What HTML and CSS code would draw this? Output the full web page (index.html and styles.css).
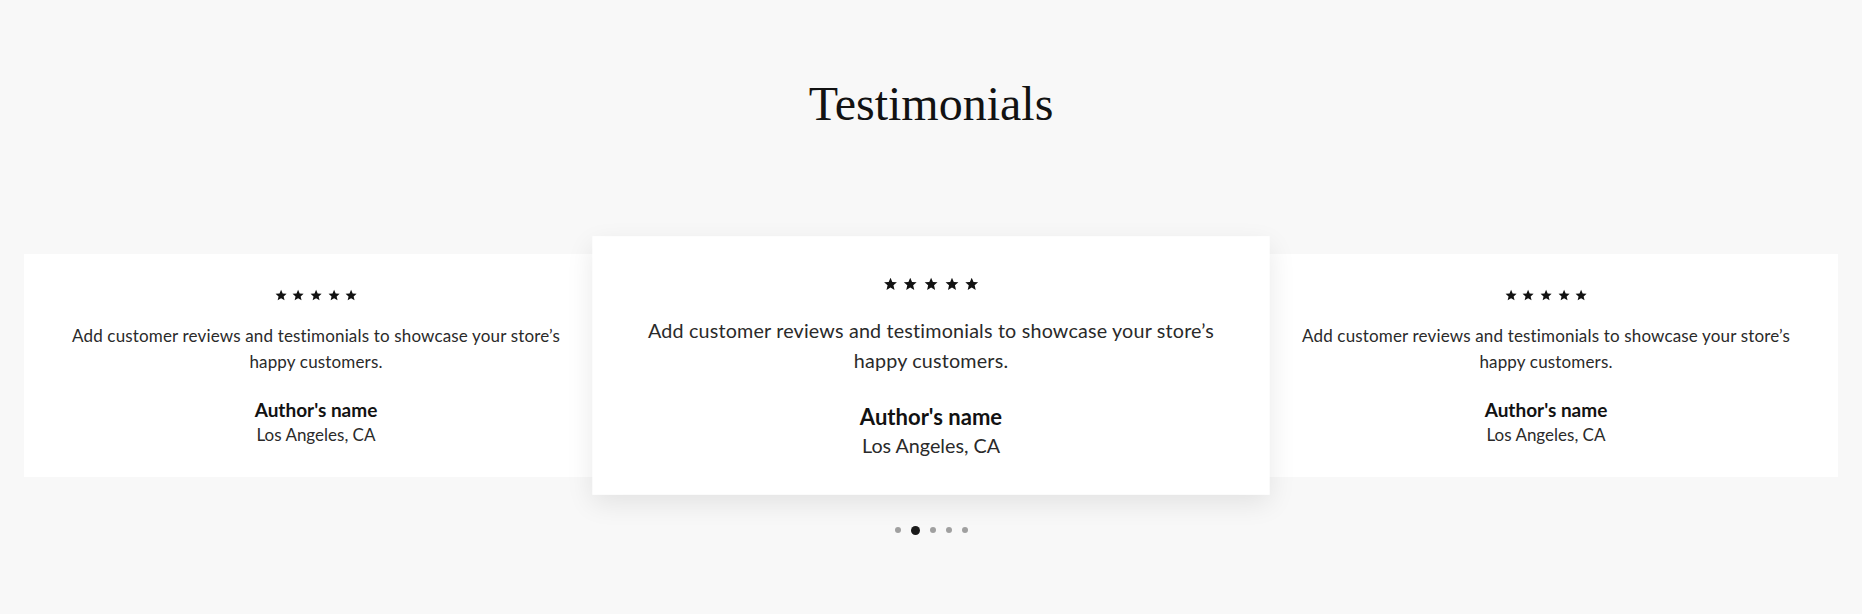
FILE: index.html
```html
<!DOCTYPE html>
<html lang="en">
<head>
<meta charset="utf-8">
<title>Testimonials</title>
<link rel="stylesheet" href="styles.css">
</head>
<body>
<section class="testimonials">
  <h2 class="title">Testimonials</h2>
  <div class="slider">
    <div class="card">
      <div class="stars">
        <svg viewBox="0 0 24 24"><path d="M12 1.5l3.1 7.2 7.8.7-5.9 5.2 1.8 7.7L12 18.3l-6.8 4 1.8-7.7-5.9-5.2 7.8-.7z"/></svg>
        <svg viewBox="0 0 24 24"><path d="M12 1.5l3.1 7.2 7.8.7-5.9 5.2 1.8 7.7L12 18.3l-6.8 4 1.8-7.7-5.9-5.2 7.8-.7z"/></svg>
        <svg viewBox="0 0 24 24"><path d="M12 1.5l3.1 7.2 7.8.7-5.9 5.2 1.8 7.7L12 18.3l-6.8 4 1.8-7.7-5.9-5.2 7.8-.7z"/></svg>
        <svg viewBox="0 0 24 24"><path d="M12 1.5l3.1 7.2 7.8.7-5.9 5.2 1.8 7.7L12 18.3l-6.8 4 1.8-7.7-5.9-5.2 7.8-.7z"/></svg>
        <svg viewBox="0 0 24 24"><path d="M12 1.5l3.1 7.2 7.8.7-5.9 5.2 1.8 7.7L12 18.3l-6.8 4 1.8-7.7-5.9-5.2 7.8-.7z"/></svg>
      </div>
      <p class="quote">Add customer reviews and testimonials to showcase your store’s happy customers.</p>
      <p class="name">Author's name</p>
      <p class="place">Los Angeles, CA</p>
    </div>
    <div class="card card--active">
      <div class="stars">
        <svg viewBox="0 0 24 24"><path d="M12 1.5l3.1 7.2 7.8.7-5.9 5.2 1.8 7.7L12 18.3l-6.8 4 1.8-7.7-5.9-5.2 7.8-.7z"/></svg>
        <svg viewBox="0 0 24 24"><path d="M12 1.5l3.1 7.2 7.8.7-5.9 5.2 1.8 7.7L12 18.3l-6.8 4 1.8-7.7-5.9-5.2 7.8-.7z"/></svg>
        <svg viewBox="0 0 24 24"><path d="M12 1.5l3.1 7.2 7.8.7-5.9 5.2 1.8 7.7L12 18.3l-6.8 4 1.8-7.7-5.9-5.2 7.8-.7z"/></svg>
        <svg viewBox="0 0 24 24"><path d="M12 1.5l3.1 7.2 7.8.7-5.9 5.2 1.8 7.7L12 18.3l-6.8 4 1.8-7.7-5.9-5.2 7.8-.7z"/></svg>
        <svg viewBox="0 0 24 24"><path d="M12 1.5l3.1 7.2 7.8.7-5.9 5.2 1.8 7.7L12 18.3l-6.8 4 1.8-7.7-5.9-5.2 7.8-.7z"/></svg>
      </div>
      <p class="quote">Add customer reviews and testimonials to showcase your store’s happy customers.</p>
      <p class="name">Author's name</p>
      <p class="place">Los Angeles, CA</p>
    </div>
    <div class="card">
      <div class="stars">
        <svg viewBox="0 0 24 24"><path d="M12 1.5l3.1 7.2 7.8.7-5.9 5.2 1.8 7.7L12 18.3l-6.8 4 1.8-7.7-5.9-5.2 7.8-.7z"/></svg>
        <svg viewBox="0 0 24 24"><path d="M12 1.5l3.1 7.2 7.8.7-5.9 5.2 1.8 7.7L12 18.3l-6.8 4 1.8-7.7-5.9-5.2 7.8-.7z"/></svg>
        <svg viewBox="0 0 24 24"><path d="M12 1.5l3.1 7.2 7.8.7-5.9 5.2 1.8 7.7L12 18.3l-6.8 4 1.8-7.7-5.9-5.2 7.8-.7z"/></svg>
        <svg viewBox="0 0 24 24"><path d="M12 1.5l3.1 7.2 7.8.7-5.9 5.2 1.8 7.7L12 18.3l-6.8 4 1.8-7.7-5.9-5.2 7.8-.7z"/></svg>
        <svg viewBox="0 0 24 24"><path d="M12 1.5l3.1 7.2 7.8.7-5.9 5.2 1.8 7.7L12 18.3l-6.8 4 1.8-7.7-5.9-5.2 7.8-.7z"/></svg>
      </div>
      <p class="quote">Add customer reviews and testimonials to showcase your store’s happy customers.</p>
      <p class="name">Author's name</p>
      <p class="place">Los Angeles, CA</p>
    </div>
  </div>
  <div class="dots">
    <span class="dot"></span>
    <span class="dot dot--active"></span>
    <span class="dot"></span>
    <span class="dot"></span>
    <span class="dot"></span>
  </div>
</section>
</body>
</html>
```

FILE: styles.css
```css
html, body {
  margin: 0;
  padding: 0;
  background: #f8f8f8;
}

.testimonials {
  min-height: 614px;
  padding-top: 75px;
  box-sizing: border-box;
  font-family: Lato, "Noto Sans", sans-serif;
  color: #2a2a2a;
}

.title {
  margin: 0;
  text-align: center;
  font-family: "Liberation Serif", serif;
  font-weight: 400;
  font-size: 48px;
  line-height: 57.6px;
  color: #121212;
}

.slider {
  display: flex;
  align-items: center;
  gap: 31px;
  padding: 0 24px;
  margin-top: 121px;
}

.card {
  flex: 1 1 0;
  min-width: 0;
  background: #ffffff;
  padding: 35px 40px 30px;
  text-align: center;
  box-sizing: border-box;
}

.card--active {
  position: relative;
  z-index: 1;
  transform: scale(1.16);
  box-shadow: 0 8px 22px rgba(0, 0, 0, 0.09);
}

.stars {
  display: flex;
  justify-content: center;
  gap: 5.5px;
  height: 12px;
}

.stars svg {
  width: 12.2px;
  height: 12.2px;
  fill: #121212;
}

.quote {
  margin: 22px 0 0;
  font-size: 17px;
  line-height: 26px;
  letter-spacing: 0.16px;
}

.name {
  margin: 22px 0 0;
  font-size: 19px;
  line-height: 26px;
  font-weight: 700;
  color: #121212;
}

.place {
  margin: 0;
  font-size: 17px;
  line-height: 24px;
}

.dots {
  display: flex;
  justify-content: center;
  align-items: center;
  gap: 10px;
  height: 9px;
  margin-top: 49px;
}

.dot {
  width: 6px;
  height: 6px;
  border-radius: 50%;
  background: #a0a0a0;
}

.dot--active {
  width: 9px;
  height: 9px;
  background: #1a1a1a;
}
```
